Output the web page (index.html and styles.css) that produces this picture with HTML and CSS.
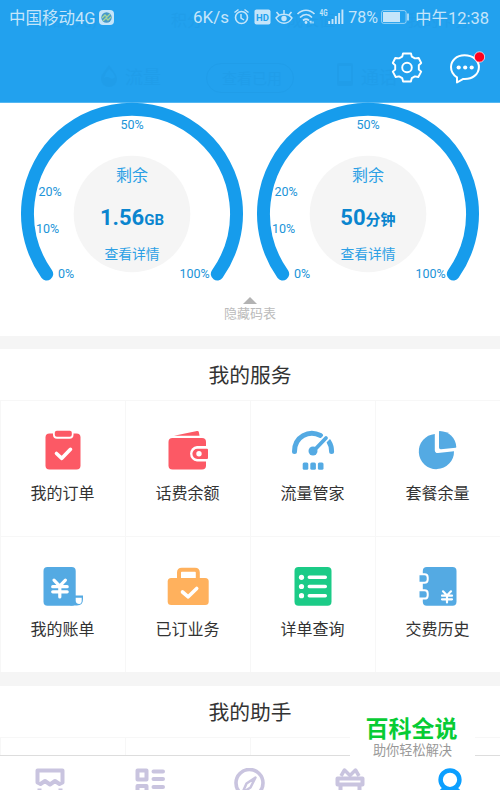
FILE: index.html
```html
<!DOCTYPE html>
<html lang="zh-CN">
<head>
<meta charset="utf-8">
<title>我的</title>
<link rel="stylesheet" href="styles.css">
</head>
<body>
<div class="phone">
  <header class="header">
    <svg class="under" width="500" height="102" viewBox="0 0 500 102" aria-hidden="true">
      <g font-size="18">
        <text x="35" y="26" font-size="17">余额(元)</text>
        <text x="171" y="26" font-size="16">积分</text>
        <text x="287" y="26" font-size="16">成长值</text>
        <text x="407" y="26" font-size="16">我的卡券</text>
        <text x="125" y="84">流量</text>
        <text x="222" y="84" font-size="15">查看已用</text>
        <text x="361" y="84">通话</text>
      </g>
      <path d="M109 65C105 71 101 74 101 79a8 8 0 0 0 16 0c0-5-4-8-8-14zM104 78q3-2 6 0t5-1q-1-4-6-8-4 4-5 9z" fill-rule="evenodd"/>
      <rect x="206.500" y="63.500" width="87" height="29" rx="14.500" fill="none" stroke="#0868a8"/>
      <path fill-rule="evenodd" d="M339 63h12q2 0 2 2v19q0 2-2 2h-12q-2 0-2-2V65q0-2 2-2zm0 3v15h12V66z"/>
    </svg>
    <div class="status">
      <span class="carrier">中国移动4G</span>
      <svg class="sim" width="15" height="15" viewBox="0 0 15 15"><rect width="15" height="15" rx="4" fill="#c5e5fa"/><circle cx="7.500" cy="7.500" r="5.200" fill="#4699c9"/><path d="M3 8l3-3 2 2 3-3M4 11l3-3 2 2 3-3" fill="none" stroke="#a5d49a" stroke-width="1.300"/></svg>
      <span class="speed">6K/s</span>
      <svg class="glyphs" width="113" height="20" viewBox="232 7 113 20" fill="none" stroke="#c5e5fa">
        <circle cx="241.500" cy="17.500" r="6" stroke-width="1.600"/><path d="M241 14v4l3 2M234.500 12.500l4-3M248.500 12.500l-4-3" stroke-width="1.500"/>
        <rect x="254.500" y="9.500" width="16" height="15" rx="2" fill="#c5e5fa" stroke="none"/>
        <text x="262.500" y="20.700" class="hd">HD</text>
        <path d="M276 18c4-5 12-5 16 0-4 7-12 7-16 0zM284 14v-4M279 15l-2.500-3M289 15l2.500-3" stroke-width="1.500"/><circle cx="284" cy="18.500" r="2.700" fill="#c5e5fa" stroke="none"/>
        <path d="M297.500 14c5-5 12-5 17 0M300 17.500c4-4 8.500-4 12 0M303 20.500q3-2.500 6 0" stroke-width="1.700"/><circle cx="306" cy="22.500" r="1.400" fill="#c5e5fa" stroke="none"/><path d="M309.500 21.500h1.500v2M313 21.500v2" stroke-width="1.300"/>
        <text x="323.500" y="16" class="net" textLength="8" lengthAdjust="spacingAndGlyphs">4G</text>
        <path d="M329.200 24v-3M332.500 24v-5M335.800 24v-8M339.100 24V13M342.400 24V9.500" stroke-width="1.900"/>
      </svg>
      <span class="percent">78%</span>
      <svg class="battery" width="29" height="14" viewBox="0 0 29 14"><rect x=".6" y=".6" width="24.500" height="12.800" rx="2" fill="none" stroke="#c5e5fa" stroke-opacity=".7"/><path d="M2 2h17v10H2z" fill="#c5e5fa"/><path d="M27 3.500v7" stroke="#c5e5fa" stroke-width="1.600"/></svg>
      <span class="clock">中午12:38</span>
    </div>
    <div class="actions">
      <svg width="32" height="32" viewBox="0 0 32 32" fill="none" stroke="#fff" stroke-width="1.900" stroke-linejoin="round"><path d="M12 2.500h8l.8 3.200 3.100 1.700 3.800-.4 2.500 5-2.400 2.200v4.300l2.400 2.100-2.900 5.400-3.400-.6-3.100 1.700-.9 3.400h-7.800l-.9-3.400-3.100-1.700-3.400.6-2.900-5.400 2.400-2.100v-4.300L1.800 12l2.500-5 3.800.4 3.100-1.700z"/><circle cx="16" cy="16.500" r="4.800"/></svg>
      <svg width="36" height="34" viewBox="0 0 36 34"><path d="M15.500 4.200C7.500 4.200 2 9.500 2 16c0 4.600 2.400 8.100 6 10.300v5.200l6.300-3.600c9.200.6 15.600-4.700 15.600-11.900 0-6.500-5.900-11.800-14.400-11.800z" fill="none" stroke="#fff" stroke-width="2" stroke-linejoin="round"/><g fill="#fff"><circle cx="9.700" cy="16.500" r="2.100"/><circle cx="16.200" cy="16.500" r="2.100"/><circle cx="22.700" cy="16.500" r="2.100"/></g><circle cx="30.500" cy="6" r="5.200" fill="#ff001c" stroke="#fff" stroke-width=".7"/></svg>
    </div>
  </header>

  <section class="usage">
    <div class="dials">
      <svg class="dial" width="236" height="190" viewBox="14 102 236 190">
        <path class="arc" d="M46.700 274A104.500 104.500 0 1 1 217.300 274"/>
        <circle cx="132" cy="214" r="58.300" fill="#f5f5f5"/>
        <g class="tick"><text x="132" y="128.500">50%</text><text x="50" y="195.500">20%</text><text x="47.500" y="233">10%</text><text x="66" y="277.500">0%</text><text x="194.500" y="277.500">100%</text></g>
        <text class="caption" x="132" y="181">剩余</text>
        <text class="amount" x="132" y="225">1.56<tspan class="unit">GB</tspan></text>
        <text class="detail" x="132" y="259">查看详情</text>
      </svg>
      <svg class="dial" width="236" height="190" viewBox="14 102 236 190">
        <path class="arc" d="M46.700 274A104.500 104.500 0 1 1 217.300 274"/>
        <circle cx="132" cy="214" r="58.300" fill="#f5f5f5"/>
        <g class="tick"><text x="132" y="128.500">50%</text><text x="50" y="195.500">20%</text><text x="47.500" y="233">10%</text><text x="66" y="277.500">0%</text><text x="194.500" y="277.500">100%</text></g>
        <text class="caption" x="132" y="181">剩余</text>
        <text class="amount" x="132" y="225">50<tspan class="unit">分钟</tspan></text>
        <text class="detail" x="132" y="259">查看详情</text>
      </svg>
    </div>
    <div class="collapse">
      <svg width="14" height="7" viewBox="0 0 14 7"><path d="M7 0l7 7H0z" fill="#b3b3b3"/></svg>
      <span>隐藏码表</span>
    </div>
  </section>

  <section class="services">
    <h2>我的服务</h2>
    <div class="grid">
      <div class="cell">
        <svg width="44" height="44" viewBox="0 0 44 44"><rect x="4.500" y="4.500" width="35" height="36" rx="4" fill="#fc5965"/><rect x="12" y="0" width="20.500" height="9.800" rx="4" fill="#fff"/><rect x="13.800" y="1.800" width="17" height="6" rx="2" fill="#fc5965"/><path d="M15.500 24.500l5.300 4.800 8.700-9" fill="none" stroke="#fff" stroke-width="3.600" stroke-linecap="round" stroke-linejoin="round"/></svg>
        <span>我的订单</span>
      </div>
      <div class="cell">
        <svg width="44" height="44" viewBox="0 0 44 44"><path d="M8 6.800L31 2q1.500-.3 1.800 1l.7 3.800z" fill="#fc5965"/><rect x="2.500" y="9" width="37.500" height="31.500" rx="4" fill="#fc5965"/><path d="M42 17h-11a7.800 7.800 0 0 0 0 15.500h11z" fill="#fff"/><path d="M41 19.700H31.500a5 5 0 0 0 0 10.200H41q1 0 1-1v-8.200q0-1-1-1z" fill="#fc5965"/><circle cx="33" cy="24.800" r="2.700" fill="#fff"/></svg>
        <span>话费余额</span>
      </div>
      <div class="cell">
        <svg width="44" height="44" viewBox="0 0 44 44" fill="none" stroke="#54aae3" stroke-linecap="round"><path d="M3.500 22.500C3.500 7.500 18 .5 29.500 6.500" stroke-width="5"/><path d="M37.800 12.500c2 3.100 2.800 6.500 2.800 10" stroke-width="5"/><path d="M22 22L36.500 7.500" stroke="#fff" stroke-width="7"/><path d="M23 21.500L35 9" stroke-width="3.800"/><circle cx="22" cy="22" r="4.500" fill="#54aae3" stroke="none"/><g fill="#54aae3" stroke="none"><rect x="11.700" y="33.500" width="5.600" height="7.200" rx="1.500"/><rect x="19.300" y="33.500" width="5.600" height="7.200" rx="1.500"/><rect x="26.900" y="33.500" width="5.600" height="7.200" rx="1.500"/></g></svg>
        <span>流量管家</span>
      </div>
      <div class="cell">
        <svg width="44" height="44" viewBox="0 0 44 44" fill="#54aae3"><path d="M18.800 5A17.600 17.600 0 1 0 38 22.200l-16 1.800q-3 .2-3.200-2.800z"/><path d="M23 2.500q0-.5.700-.5C33 2.300 39.800 9 40.300 18q0 .7-.7.800l-14.700 1.400Q23 20.300 23 18.500z"/></svg>
        <span>套餐余量</span>
      </div>
      <div class="cell">
        <svg width="44" height="44" viewBox="0 0 44 44"><rect x="2.500" y="2" width="32.200" height="38.800" rx="4" fill="#54aae3"/><path d="M34 30.500h8v3.500q0 6.500-6 6.500h-7l5-4z" fill="#54aae3"/><path d="M34.700 32.700h6v3q0 3-2.500 3.200-3.500 0-3.500-3.400z" fill="#fff"/><path d="M13 15.200l5.700 6 5.700-6M11.700 21.700h14.500M11.700 26.800h14.500M18.800 21.500V32" fill="none" stroke="#fff" stroke-width="3.200" stroke-linecap="round"/></svg>
        <span>我的账单</span>
      </div>
      <div class="cell">
        <svg width="44" height="44" viewBox="0 0 44 44"><rect x="1.700" y="13" width="41" height="27" rx="3.500" fill="#ffb15d"/><path d="M13 14V7.500q0-2.800 2.800-2.800H29q2.800 0 2.800 2.800V14" fill="none" stroke="#ffb15d" stroke-width="4"/><path d="M16.500 27l5.700 4.800 8.500-8.300" fill="none" stroke="#fff" stroke-width="3.600" stroke-linecap="round" stroke-linejoin="round"/></svg>
        <span>已订业务</span>
      </div>
      <div class="cell">
        <svg width="44" height="44" viewBox="0 0 44 44"><rect x="3.500" y="2" width="37" height="38.800" rx="4" fill="#1bcb87"/><g fill="#fff"><circle cx="10.500" cy="12.300" r="2.600"/><circle cx="10.500" cy="21.500" r="2.600"/><circle cx="10.500" cy="30.700" r="2.600"/></g><path d="M18.300 12.300h16M18.300 21.500h16M18.300 30.700h16" stroke="#fff" stroke-width="3.500" stroke-linecap="round"/></svg>
        <span>详单查询</span>
      </div>
      <div class="cell">
        <svg width="44" height="44" viewBox="0 0 44 44"><rect x="6.800" y="2" width="33.700" height="38.800" rx="4" fill="#54aae3"/><g fill="#54aae3" stroke="#fff" stroke-width="2"><path d="M2.500 9.300h6q3.200 0 3.200 3.200v2q0 3.200-3.200 3.200h-6zM2.500 25.200h6q3.200 0 3.200 3.200v2q0 3.200-3.200 3.200h-6z"/></g><path d="M27 26.300l4 4.200 4-4.200M26 30.700h10M26 34.300h10M31 30.500v7" fill="none" stroke="#fff" stroke-width="2.200" stroke-linecap="round"/></svg>
        <span>交费历史</span>
      </div>
    </div>
  </section>

  <section class="helper">
    <h2>我的助手</h2>
    <div class="grid stub"><div class="cell"></div><div class="cell"></div><div class="cell"></div><div class="cell"></div></div>
  </section>

  <nav class="tabs">
    <svg width="32" height="23" viewBox="0 0 32 23" fill="none" stroke="#c9c4df" stroke-width="4" stroke-linejoin="round"><path d="M3.500 2.500h25v12l-3 1.500-4.500-3-5 3.500-5-3.500-4.500 3-3-1.500z"/><path d="M5.500 20.500v6M26.500 20.500v6"/></svg>
    <svg width="32" height="23" viewBox="0 0 32 23" fill="none" stroke="#c9c4df" stroke-width="4" stroke-linejoin="round" stroke-linecap="round"><rect x="3.500" y="2.500" width="9" height="9"/><rect x="3.500" y="18" width="9" height="9"/><path d="M19.500 3.500h9.500M19.500 11h9.500M19.500 19h9.500"/></svg>
    <svg width="32" height="23" viewBox="0 0 32 23" fill="none" stroke="#c9c4df" stroke-width="3"><circle cx="15.500" cy="15" r="13.500" stroke-width="3.600"/><path d="M21.500 9.500l-9 6-4 9 8-5z" stroke-linejoin="round" stroke-width="2.500"/></svg>
    <svg width="32" height="23" viewBox="0 0 32 23" fill="none" stroke="#c9c4df" stroke-width="4" stroke-linejoin="round"><path d="M3.500 10.500h25v6h-25zM6.500 17v8h19v-8"/><path d="M7 8l3.500-6 5.500 5.500L21.500 2 25 8" stroke-width="3.500"/></svg>
    <svg width="32" height="23" viewBox="0 0 32 23" fill="none" stroke="#0b9fff" stroke-width="4.500"><circle cx="16" cy="11.800" r="9.400"/><path d="M11 20l-7 7M21 20l7 7"/></svg>
  </nav>
  <aside class="watermark"><strong>百科全说</strong><span>助你轻松解决</span></aside>
</div>
</body>
</html>
```
FILE: styles.css
```css
* { box-sizing: border-box; }
body { margin: 0; background: #fff; font-family: Roboto, "Noto Sans CJK SC", sans-serif; }
.phone { position: relative; width: 500px; height: 790px; overflow: hidden; display: flex; flex-direction: column; }
.header { position: relative; flex: none; height: 103px; background: #22a1ee; border-bottom: 1px solid #54b7f2; }
.under { position: absolute; inset: 0; opacity: .06; fill: #0868a8; }
.status { position: relative; display: flex; align-items: center; height: 34px; padding-left: 9px; color: #c5e5fa; font-size: 16.500px; white-space: nowrap; }
.status > * { flex: none; }
.carrier { width: 90px; }
.speed { margin-left: 79px; width: 39px; font-size: 17px; }
.percent { width: 36px; font-size: 16px; text-align: center; }
.clock { margin-left: 5px; }
.hd { fill: #22a1ee; stroke: none; font-size: 9.500px; font-weight: 700; text-anchor: middle; }
.net { fill: #c5e5fa; stroke: none; font-size: 9px; font-weight: 700; text-anchor: middle; }
.actions { position: relative; display: flex; justify-content: flex-end; gap: 26px; padding: 17px 15px 0 0; }
.usage { flex: none; height: 234px; margin-top: -1px; position: relative; }
.dials { display: flex; padding-left: 14px; height: 195px; }
.dial { flex: none; }
.arc { fill: none; stroke: #169cec; stroke-width: 13; stroke-linecap: round; }
.dial text { text-anchor: middle; }
.tick { font-size: 12.500px; fill: #2194d8; }
.caption { font-size: 16px; fill: #2ca0e5; }
.detail { font-size: 13.800px; fill: #2ca0e5; }
.amount { font-size: 22px; font-weight: 700; fill: #0a85cf; }
.unit { font-size: 15px; }
.collapse { display: flex; flex-direction: column; align-items: center; font-size: 13px; line-height: 18px; color: #bbb; }
.collapse span { margin-top: 1px; }
.services { flex: none; height: 336px; border-top: 13px solid #f5f5f5; }
.helper { flex: none; height: 83px; border-top: 14px solid #f5f5f5; overflow: hidden; }
h2 { margin: 0; height: 51px; line-height: 55px; text-align: center; font-size: 20.800px; font-weight: 400; color: #333; }
.grid { display: grid; grid-template-columns: repeat(4, 125px); grid-auto-rows: 136px; }
.cell { display: flex; flex-direction: column; align-items: center; padding: 28px 1px 0 0; border-top: 1px solid #f7f7f7; border-left: 1px solid #f7f7f7; font-size: 16px; color: #333; line-height: 24px; }
.cell span { margin-top: 9px; }
.tabs { flex: none; display: grid; grid-template-columns: repeat(5, 100px); justify-items: center; height: 35px; padding-top: 12px; background: #fff; border-top: 1px solid #ddd; }
.watermark { position: absolute; left: 350px; top: 712px; width: 125px; height: 49px; background: #fff; display: flex; flex-direction: column; align-items: center; color: #999; font-size: 13.200px; line-height: 16px; }
.watermark strong { color: #07cc35; font-size: 23px; line-height: 30px; height: 29px; margin-top: 2px; padding-top: 1px; margin-right: 2px; }
```
